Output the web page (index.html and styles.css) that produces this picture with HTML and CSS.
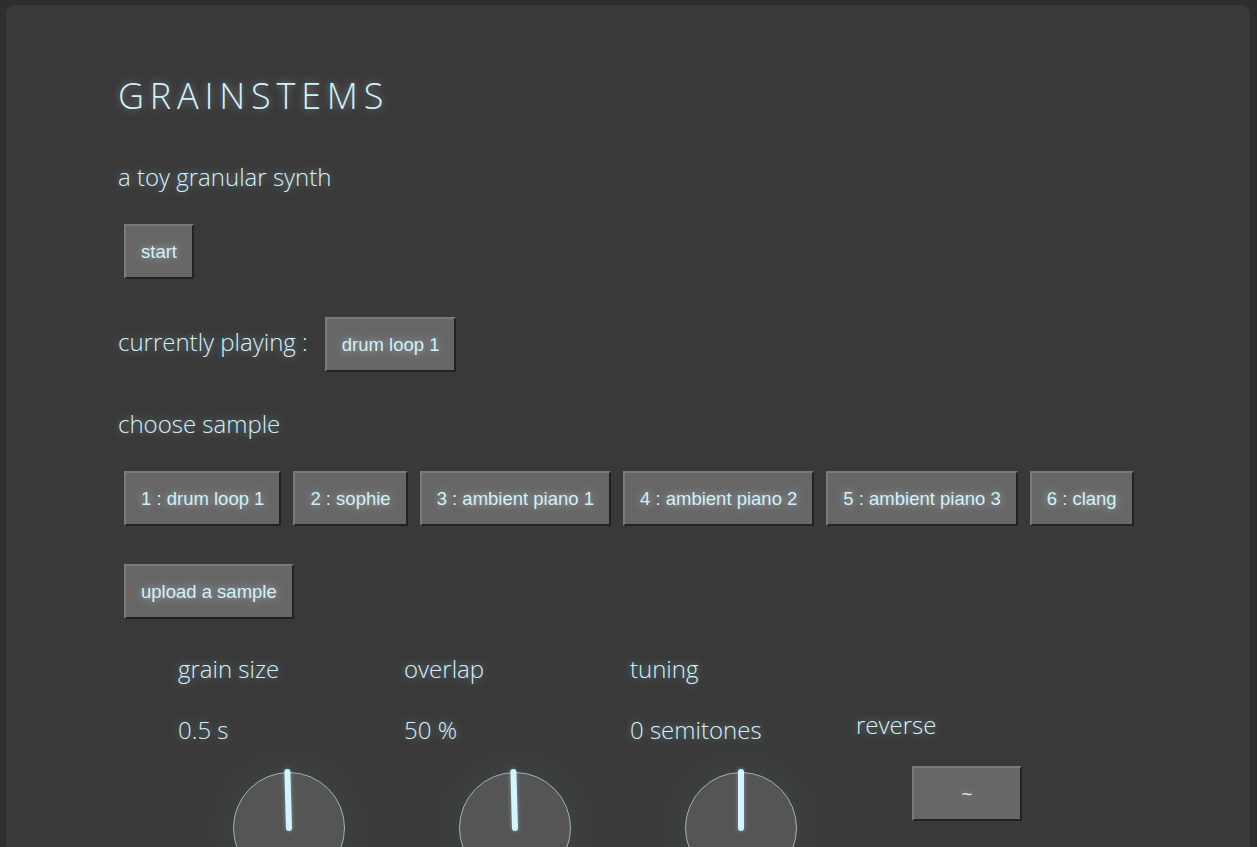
FILE: index.html
```html
<!DOCTYPE html>
<html>
<head>
<meta charset="utf-8">
<title>grainstems</title>
<link rel="stylesheet" href="styles.css">
</head>
<body>
<main class="panel">
  <h1 class="title">GRAINSTEMS</h1>
  <p class="subtitle">a toy granular synth</p>
  <div class="row start-row">
    <button class="btn">start</button>
  </div>
  <div class="row playing-row">
    <span class="label">currently playing :</span>
    <button class="btn">drum loop 1</button>
  </div>
  <p class="label choose">choose sample</p>
  <div class="row samples">
    <button class="btn">1 : drum loop 1</button>
    <button class="btn">2 : sophie</button>
    <button class="btn">3 : ambient piano 1</button>
    <button class="btn">4 : ambient piano 2</button>
    <button class="btn">5 : ambient piano 3</button>
    <button class="btn">6 : clang</button>
  </div>
  <div class="row upload-row">
    <button class="btn">upload a sample</button>
  </div>
  <section class="controls">
    <div class="control">
      <div class="label ctl-name">grain size</div>
      <div class="label ctl-value">0.5 s</div>
      <div class="knob"><span class="pointer" style="transform: rotate(-1.6deg)"></span></div>
    </div>
    <div class="control">
      <div class="label ctl-name">overlap</div>
      <div class="label ctl-value">50 %</div>
      <div class="knob"><span class="pointer" style="transform: rotate(-1.6deg)"></span></div>
    </div>
    <div class="control">
      <div class="label ctl-name">tuning</div>
      <div class="label ctl-value">0 semitones</div>
      <div class="knob"><span class="pointer" style="transform: rotate(0deg)"></span></div>
    </div>
    <div class="control reverse">
      <div class="label rev-name">reverse</div>
      <button class="btn rev-btn">~</button>
    </div>
  </section>
</main>
</body>
</html>
```

FILE: styles.css
```css
html, body {
  margin: 0;
  padding: 0;
  background: #2e2e2e;
  height: 100%;
  overflow: hidden;
}

.panel {
  margin: 5px 7px 0 6px;
  background: #393939;
  border-radius: 8px 8px 0 0;
  padding: 66px 0 40px 112px;
  min-height: 900px;
  box-sizing: border-box;
  color: #cdf3ff;
  font-family: "Open Sans", "Noto Sans", sans-serif;
  font-weight: 300;
}

.title {
  margin: 0;
  font-size: 36px;
  line-height: 50px;
  font-weight: 300;
  letter-spacing: 5.8px;
  text-shadow: 0 0 8px rgba(230, 245, 255, 0.45);
}

.label, .subtitle {
  font-size: 24px;
  line-height: 32px;
  text-shadow: 0 0 8px rgba(230, 245, 255, 0.45);
}

.subtitle {
  margin: 40px 0 0 0;
}

.row {
  display: flex;
  align-items: center;
}

.start-row {
  margin-top: 31px;
}

.playing-row {
  margin-top: 38px;
}

.playing-row .label {
  margin-right: 11px;
  margin-bottom: 6px;
}

.choose {
  margin: 36px 0 0 0;
}

.samples {
  margin-top: 31px;
}

.upload-row {
  margin-top: 38px;
}

.btn {
  box-sizing: border-box;
  height: 55px;
  font-family: "Liberation Sans", Arial, sans-serif;
  font-size: 18.5px;
  line-height: 21px;
  color: #cdf3ff;
  background: #666666;
  border: 2px solid;
  border-color: #7a7a7a #222222 #222222 #7a7a7a;
  padding: 0 15px;
  margin: 0 6px;
  text-shadow: 0 0 10px rgba(255, 255, 255, 0.55);
  cursor: pointer;
}

.controls {
  display: flex;
  margin: 34px 0 0 60px;
}

.control {
  width: 226px;
  display: flex;
  flex-direction: column;
}

.ctl-value {
  margin-top: 29px;
}

.knob {
  position: relative;
  width: 110px;
  height: 110px;
  margin: 26px 0 0 55px;
  border: 1px solid #9db2ba;
  border-radius: 50%;
  background: #555555;
  box-shadow: 0 0 40px 12px rgba(200, 230, 240, 0.05);
}

.pointer {
  position: absolute;
  left: 52px;
  top: -4px;
  width: 6px;
  height: 62px;
  border-radius: 3px;
  background: #d2f5ff;
  transform-origin: 3px 60px;
  box-shadow: 0 0 4px rgba(210, 245, 255, 0.4);
}

.reverse {
  padding-top: 56px;
}

.rev-name {
  margin: 0;
}

.rev-btn {
  align-self: flex-start;
  width: 110px;
  height: 55px;
  margin: 25px 0 0 56px;
  padding: 0;
}
```
